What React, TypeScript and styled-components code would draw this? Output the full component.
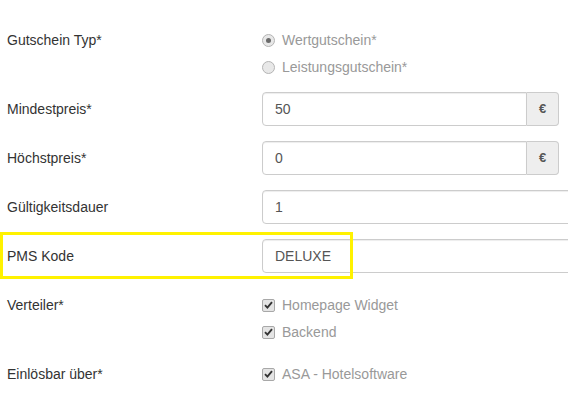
import React from "react";
import styled, { createGlobalStyle } from "styled-components";

const GlobalStyle = createGlobalStyle`
  html, body {
    margin: 0;
    padding: 0;
    background: #fff;
    overflow: hidden;
  }
  body {
    font-family: "Liberation Sans", Arial, Helvetica, sans-serif;
    font-size: 14px;
    line-height: 20px;
    color: #333;
  }
`;

const Form = styled.form`
  width: 568px;
  padding-top: 23px;
  overflow: hidden;
`;

const FormGroup = styled.div`
  position: relative;
  display: grid;
  grid-template-columns: 262px 1fr;
  margin-bottom: 15px;
`;

const Label = styled.label`
  padding: 7px 0 0 7px;
  line-height: 20px;
  color: #333;
`;

const Controls = styled.div`
  display: flex;
  flex-direction: column;
  gap: 7px;
  padding-top: 7px;
  min-width: 0;
`;

const InputCol = styled.div`
  min-width: 0;
`;

const OptionRow = styled.div`
  display: flex;
  align-items: center;
  height: 20px;
  color: #999;
`;

const RadioDot = styled.span<{ $checked?: boolean }>`
  position: relative;
  box-sizing: border-box;
  width: 13px;
  height: 13px;
  margin-right: 7px;
  border: 1px solid #b4b4b4;
  border-radius: 50%;
  background: #e8e8e8;
  &::after {
    content: "";
    display: ${(p) => (p.$checked ? "block" : "none")};
    position: absolute;
    left: 3px;
    top: 3px;
    width: 5px;
    height: 5px;
    border-radius: 50%;
    background: #6a6a6a;
  }
`;

const CheckBox = styled.span`
  display: flex;
  align-items: center;
  justify-content: center;
  box-sizing: border-box;
  width: 13px;
  height: 13px;
  margin-right: 7px;
  border: 1px solid #a8a8a8;
  border-radius: 2px;
  background: #e4e4e4;
`;

const InputGroup = styled.div<{ $width: number }>`
  display: flex;
  width: ${(p) => p.$width}px;
  height: 34px;
`;

const TextInput = styled.div<{ $addon?: boolean }>`
  flex: 1;
  box-sizing: border-box;
  height: 34px;
  padding: 6px 12px;
  border: 1px solid #ccc;
  border-radius: ${(p) => (p.$addon ? "4px 0 0 4px" : "4px")};
  box-shadow: inset 0 1px 1px rgba(0, 0, 0, 0.075);
  color: #555;
  line-height: 20px;
  background: #fff;
`;

const Addon = styled.span`
  box-sizing: border-box;
  width: 32px;
  height: 34px;
  display: flex;
  align-items: center;
  justify-content: center;
  border: 1px solid #ccc;
  border-left: 0;
  border-radius: 0 4px 4px 0;
  background: #eee;
  color: #555;
  font-weight: bold;
  font-size: 13px;
`;

const Highlight = styled.div`
  position: absolute;
  left: 0;
  top: -7px;
  width: 353px;
  height: 47px;
  box-sizing: border-box;
  border: 3px solid #fff200;
  pointer-events: none;
`;

const Check = () => (
  <svg width="9" height="8" viewBox="0 0 9 8">
    <path d="M1 4.2 L3.4 6.6 L8 1.2" fill="none" stroke="#333" strokeWidth="1.9" />
  </svg>
);

const App = () => {
  return (
    <>
      <GlobalStyle />
      <Form>
        <FormGroup>
          <Label>Gutschein Typ*</Label>
          <Controls>
            <OptionRow>
              <RadioDot $checked />
              Wertgutschein*
            </OptionRow>
            <OptionRow>
              <RadioDot />
              Leistungsgutschein*
            </OptionRow>
          </Controls>
        </FormGroup>

        <FormGroup>
          <Label>Mindestpreis*</Label>
          <InputCol>
            <InputGroup $width={297}>
              <TextInput $addon>50</TextInput>
              <Addon>€</Addon>
            </InputGroup>
          </InputCol>
        </FormGroup>

        <FormGroup>
          <Label>Höchstpreis*</Label>
          <InputCol>
            <InputGroup $width={297}>
              <TextInput $addon>0</TextInput>
              <Addon>€</Addon>
            </InputGroup>
          </InputCol>
        </FormGroup>

        <FormGroup>
          <Label>Gültigkeitsdauer</Label>
          <InputCol>
            <InputGroup $width={340}>
              <TextInput>1</TextInput>
            </InputGroup>
          </InputCol>
        </FormGroup>

        <FormGroup>
          <Label>PMS Kode</Label>
          <InputCol>
            <InputGroup $width={340}>
              <TextInput>DELUXE</TextInput>
            </InputGroup>
          </InputCol>
          <Highlight />
        </FormGroup>

        <FormGroup>
          <Label>Verteiler*</Label>
          <Controls>
            <OptionRow>
              <CheckBox>
                <Check />
              </CheckBox>
              Homepage Widget
            </OptionRow>
            <OptionRow>
              <CheckBox>
                <Check />
              </CheckBox>
              Backend
            </OptionRow>
          </Controls>
        </FormGroup>

        <FormGroup>
          <Label>Einlösbar über*</Label>
          <Controls>
            <OptionRow>
              <CheckBox>
                <Check />
              </CheckBox>
              ASA - Hotelsoftware
            </OptionRow>
          </Controls>
        </FormGroup>
      </Form>
    </>
  );
};

export default App;
